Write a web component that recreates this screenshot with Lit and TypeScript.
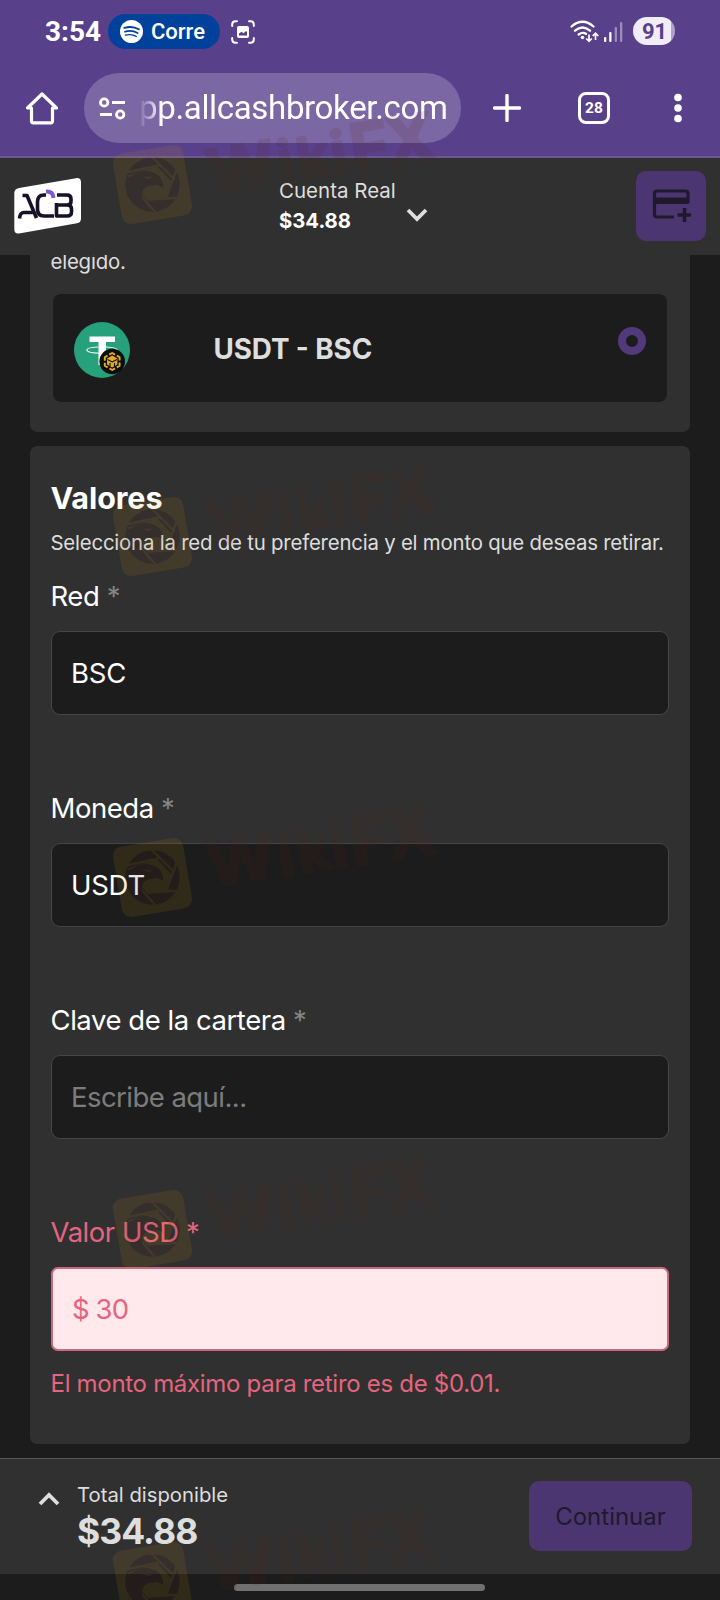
import { LitElement, html, svg, css } from "lit";
import { customElement, property } from "lit/decorators.js";

@customElement("form-field")
class FormField extends LitElement {
  @property() label = "";
  @property() value = "";
  @property() placeholder = "";
  @property() error = "";

  static styles = css`
    :host { display: block; height: 212px; }
    .label { height: 44px; line-height: 44px; padding-top: 0.5px; box-sizing: border-box; font-size: 27.5px; letter-spacing: -0.45px; color: #fff; margin: 0 0 14px -0.5px; white-space: pre; }
    .star { color: #858585; }
    .box {
      box-sizing: border-box; height: 84px; border: 1px solid #454545; border-radius: 9px;
      background: #1c1c1c; padding: 0 19px; line-height: 82px; font-size: 27.5px; letter-spacing: -0.25px; color: #fff; white-space: pre;
    }
    .placeholder { color: #7c7c7c; letter-spacing: -0.55px; }
    .bad { color: #e5657f; }
    .box.bad { background: #ffe9ed; border: 2px solid #ca6a7e; border-radius: 7px; line-height: 80px; letter-spacing: -0.9px; }
    .error { margin: 16px 0 0 -0.5px; line-height: 34px; font-size: 24px; letter-spacing: -0.3px; color: #e5657f; white-space: nowrap; }
  `;

  render() {
    const bad = this.error ? "bad" : "";
    return html`
      <div class="label ${bad}">${this.label} <span class="${bad || "star"}">*</span></div>
      <div class="box ${bad}">${this.value || html`<span class="placeholder">${this.placeholder}</span>`}</div>
      ${this.error ? html`<div class="error">${this.error}</div>` : ""}
    `;
  }
}

const WATERMARK_TOPS = [144, 496, 837, 1189, 1541];

@customElement("app-root")
class AppRoot extends LitElement {
  static styles = css`
    :host {
      display: block; position: relative; width: 720px; height: 1600px; overflow: hidden;
      background: #1c1c1c; font-family: Inter, "Liberation Sans", sans-serif; color: #dedede;
    }
    svg { display: block; flex: none; }
    .page { display: flex; flex-direction: column; height: 1600px; }
    .chrome { height: 156px; background: #59408b; border-bottom: 2px solid #6d5893; color: #fff; font-family: Roboto, sans-serif; flex: none; }
    .status { display: flex; align-items: center; height: 35px; padding: 14px 45px 0 45px; }
    .time { width: 63px; font: 700 28px/35px Roboto, sans-serif; white-space: nowrap; }
    .pill { display: flex; align-items: center; gap: 8px; box-sizing: border-box; width: 112px; height: 35px; border-radius: 18px; background: #00419b; padding-left: 12px; font: 500 22px/35px Roboto, sans-serif; white-space: nowrap; }
    .shot { margin-left: 11px; }
    .wifi { margin: -2px 0 0 auto; }
    .signal { margin: -2px 10px 0 5px; }
    .battery { width: 42px; height: 28px; border-radius: 14px; background: linear-gradient(90deg, #f1edf8 38px, #b0a2cb 38px); color: #59408b; font: 700 22px/29px Roboto, sans-serif; text-indent: 9px; margin-top: -2px; }
    .toolbar { display: flex; align-items: center; height: 70px; margin-top: 24px; padding: 0 24px 0 26px; }
    .omnibox { display: flex; align-items: center; box-sizing: border-box; width: 377px; height: 70px; margin-left: 26px; border-radius: 35px; background: #7b67a3; padding-left: 15px; }
    .url { margin-left: 13px; font: 400 33px/72px Roboto, sans-serif; letter-spacing: -0.33px; white-space: nowrap; -webkit-mask-image: linear-gradient(90deg, transparent 0, #000 22px); mask-image: linear-gradient(90deg, transparent 0, #000 22px); }
    .plus { margin-left: 32px; }
    .tabs { display: flex; align-items: center; justify-content: center; box-sizing: border-box; width: 32px; height: 32px; margin-left: 57px; border: 3px solid #fff; border-radius: 8px; font: 700 15.5px/26px Roboto, sans-serif; }
    .dots { margin-left: 64px; }
    .appbar { display: flex; align-items: center; box-sizing: border-box; height: 97px; flex: none; background: #303030; padding: 0 14px 2px; }
    .account { margin: 0 0 0 197px; width: 118px; font-size: 20.5px; line-height: 30px; white-space: nowrap; }
    .balance { font-weight: 700; color: #fff; font-size: 20.3px; }
    .caret { margin: 19px 0 0 9px; }
    .deposit { display: flex; align-items: center; justify-content: center; width: 70px; height: 70px; margin-left: auto; border-radius: 10px; background: #4c3672; }
    .content { display: flex; flex-direction: column; height: 1203px; flex: none; overflow: hidden; padding: 0 30px; }
    .card { box-sizing: border-box; background: #303030; border-radius: 7px; padding: 0 21px; flex: none; }
    .first { height: 198px; margin-top: -21px; padding: 13px 23px 0; }
    .note { line-height: 30px; height: 47px; font-size: 20.4px; letter-spacing: -0.2px; margin-left: -2.5px; }
    .option { display: flex; box-sizing: border-box; height: 108px; border-radius: 8px; background: #1c1c1c; padding: 28px 21px 0; }
    .name { margin-left: 83.5px; font-size: 27.8px; letter-spacing: -0.1px; line-height: 54px; font-weight: 700; font-feature-settings: "case"; white-space: nowrap; }
    .radio { box-sizing: border-box; width: 28px; height: 28px; margin: 5px 0 0 auto; border: 8.7px solid #503a7a; border-radius: 50%; }
    .values { height: 998px; margin-top: 14px; }
    .title { padding-top: 32px; font-size: 30.5px; letter-spacing: -0.1px; line-height: 40px; font-weight: 700; color: #fff; margin-left: -0.5px; }
    .lead { font-size: 20.4px; letter-spacing: -0.21px; line-height: 30px; margin: 10px 0 15px -0.5px; white-space: nowrap; }
    .footer { display: flex; box-sizing: border-box; height: 116px; flex: none; background: #303030; border-top: 1px solid #555; padding: 22px 28px 0 38px; }
    .up { margin-top: 11px; }
    .total { margin-left: 17px; font-size: 20.3px; line-height: 28px; white-space: nowrap; }
    .amount { font-size: 35.5px; letter-spacing: -0.95px; line-height: 45px; font-weight: 700; }
    .next { width: 163px; height: 70px; margin-left: auto; border-radius: 10px; background: #4c3672; color: #1f1a2b; font-size: 24px; line-height: 71px; text-align: center; }
    .gesture { width: 251px; height: 7px; margin: 10px 0 0 234px; border-radius: 4px; background: #707070; }
    .marks { position: absolute; top: 0; left: 0; pointer-events: none; }
    .mark-text { font-family: Inter, sans-serif; font-weight: 600; }
  `;

  watermark(top: number) {
    const ink = "rgb(88,32,16)";
    const gold = "rgb(206,150,8)";
    return svg`
      <g transform="translate(152.5 ${top + 40.5})" opacity=".115">
        <rect x="-35.5" y="-35.5" width="71" height="71" rx="9" fill="${gold}" transform="rotate(-9.5)"/>
        <circle r="27.300" fill="${ink}"/>
        <path d="M-25 -9L5 -18L19 -3L13 13L-5 16L-12 8Z" fill="${gold}"/>
        <path d="M-1 -28L22 -5M-26 -12L6 -19M25 -17L13 15M29 13L-4 15M3 28L-11 12" fill="none" stroke="${gold}" stroke-width="2.400"/>
        <path d="M-27 -2Q-24 -8 -20 -9Q-10 -16 0 -12Q10 -10 11 4Q6 -1 0 1Q-13 2 -10 15Q-6 23 2 27Q-16 26 -24 12L-19 13Q-26 7 -26 2L-21 4Z" fill="${ink}"/>
        <path d="M-9 -8Q-5 -4 0 -7Z" fill="${gold}"/>
        <g class="mark-text" transform="rotate(-9.5)" fill="${ink}" stroke="${ink}" stroke-width="3.500" stroke-linejoin="round">
          <text x="56" y="19" font-size="60" textLength="68" lengthAdjust="spacingAndGlyphs">W</text>
          <text x="127" y="21" font-size="59">i</text>
          <text x="147" y="20" font-size="57" textLength="32" lengthAdjust="spacingAndGlyphs">k</text>
          <text x="181" y="21" font-size="59">i</text>
          <text x="201 238" y="22" font-size="66">FX</text>
        </g>
      </g>`;
  }

  render() {
    return html`
      <div class="page">
        <div class="chrome">
          <div class="status">
            <div class="time">3:54</div>
            <div class="pill">
              <svg width="23" height="23" viewBox="0 0 24 24"><circle cx="12" cy="12" r="12" fill="#fff"/><g fill="none" stroke="#00419b" stroke-linecap="round"><path d="M4.5 8.2C9.5 6.7 15.500 7.200 19.700 9.700" stroke-width="2"/><path d="M5 12.200C9.500 10.800 14.500 11.400 18.400 13.600" stroke-width="1.700"/><path d="M5.600 15.800C9.500 14.800 13.600 15.200 17 17.200" stroke-width="1.500"/></g></svg>
              Corre
            </div>
            <svg class="shot" width="24" height="24" viewBox="0 0 24 24"><g fill="none" stroke="#fff" stroke-width="2" stroke-linecap="round"><path d="M1.200 6V4.500Q1.200 1.200 4.500 1.200H6M18 1.200H19.500Q22.800 1.200 22.800 4.500V6M22.800 18V19.500Q22.800 22.800 19.500 22.800H18M6 22.800H4.500Q1.200 22.800 1.200 19.500V18"/></g><rect x="6" y="6" width="12" height="12" rx="2" fill="#fff"/><path d="M8 15.500V13.500L10.500 11.800L12.500 13.300L15 11L16 12V15.500Z" fill="#59408b"/></svg>
            <svg class="wifi" width="29" height="24" viewBox="0 0 29 24"><g fill="none" stroke="#fff" stroke-width="2.300" stroke-linecap="round"><path d="M1.500 7.500Q12.500 -2 23.500 7.500M5 11.700Q12.500 5.300 20 11.700M8.700 15.500Q12.500 12.500 16 14.800"/></g><circle cx="12.500" cy="18.500" r="1.800" fill="#fff"/><g fill="none" stroke="#fff" stroke-width="1.700"><path d="M19 15.500V22M16.200 19.500L19 22.300L21.800 19.500M25.500 21V14.500M22.700 17L25.500 14.200L28.300 17"/></g></svg>
            <svg class="signal" width="19" height="22" viewBox="0 0 19 22"><g fill="#fff"><rect x="0" y="17" width="2.300" height="5" rx="1"/><rect x="5.200" y="12" width="2.300" height="10" rx="1"/><g opacity=".4"><rect x="10.700" y="7" width="2.300" height="15" rx="1"/><rect x="16" y="2" width="2.300" height="20" rx="1"/></g></g></svg>
            <div class="battery">91</div>
          </div>
          <div class="toolbar">
            <svg width="32" height="34" viewBox="0 0 32 34"><path d="M1.500 17H5.500V30Q5.500 31.800 7.300 31.800H24.700Q26.500 31.800 26.500 30V17H30.500L16 3Z" fill="none" stroke="#fff" stroke-width="3.200" stroke-linejoin="round"/></svg>
            <div class="omnibox">
              <svg width="27" height="23" viewBox="0 0 27 23"><g fill="none" stroke="#fff" stroke-width="2.800"><circle cx="5.200" cy="5.500" r="3.700"/><circle cx="21.200" cy="17.500" r="3.700"/><path d="M13 5.500H26M1 17.500H13"/></g></svg>
              <div class="url">pp.allcashbroker.com</div>
            </div>
            <svg class="plus" width="28" height="28" viewBox="0 0 28 28"><path d="M14 1.500V26.500M1.500 14H26.500" stroke="#fff" stroke-width="3.400" stroke-linecap="round"/></svg>
            <div class="tabs">28</div>
            <svg class="dots" width="8" height="30" viewBox="0 0 8 30"><g fill="#fff"><circle cx="4" cy="4.500" r="3.800"/><circle cx="4" cy="15" r="3.800"/><circle cx="4" cy="25.500" r="3.800"/></g></svg>
          </div>
        </div>

        <div class="appbar">
          <svg width="68" height="58" viewBox="0 0 68 58"><path d="M5 11L62 1.200Q67 .5 67 5.500V41.500Q67 45.500 63 46.300L5 56.500Q.3 57 .3 52.500V16Q.3 12 5 11Z" fill="#fff"/><g fill="none" stroke="#181028" stroke-width="3.600" stroke-linejoin="round"><path d="M8.500 18.500H13L22.500 41M5.500 41.500Q6 35.500 10 35.500H19"/><path d="M32 18H30Q23.500 18 23.500 25V32Q23.500 39 30 39H40"/><path d="M43 18H53Q57 18 57 22V24.500Q57 28 53 28H43M53 28Q57.500 28 57.500 32V35Q57.500 39 53 39H42.500V26"/></g><path d="M32 14.500Q39 14 39.500 21" fill="none" stroke="#8057dc" stroke-width="4"/></svg>
          <div class="account"><div>Cuenta Real</div><div class="balance">$34.88</div></div>
          <svg class="caret" width="22" height="14" viewBox="0 0 22 14"><path d="M2 2L11 11L20 2" fill="none" stroke="#dedede" stroke-width="3.800"/></svg>
          <div class="deposit"><svg width="40" height="34" viewBox="0 0 40 34"><g fill="none" stroke="#1f1a2b"><path d="M23 28H6Q3.500 28 3.500 25.500V4.500Q3.500 2 6 2H34.500Q37 2 37 4.500V14.500" stroke-width="3.200"/><path d="M3.500 11.700H37" stroke-width="6.400"/><path d="M33.500 19V33M26.500 26H40" stroke-width="3.600"/></g></svg></div>
        </div>

        <div class="content">
          <div class="card first">
            <div class="note">elegido.</div>
            <div class="option">
              <svg width="56" height="56" viewBox="0 0 56 56"><circle cx="28" cy="28" r="28" fill="#26a17b"/><path d="M15.500 14.500H41V20H32V43H24.500V20H15.500Z" fill="#fff"/><path d="M24 25Q13 25.500 12.800 28Q13 31 28 31.300Q43 31 43.200 28Q43 25.500 32 25" fill="none" stroke="#fff" stroke-width="1.100"/><circle cx="38.200" cy="39.500" r="12.800" fill="#0c0e0c"/><path d="M38.200 31L45.600 35.200V43.800L38.200 48L30.800 43.800V35.200Z" fill="none" stroke="#e4a928" stroke-width="1.900" stroke-dasharray="6.500 2" stroke-dashoffset="3.200"/><path d="M38.200 33.500L43.400 36.500V42.500L38.200 45.500L33 42.500V36.500Z" fill="#e4a928"/><path d="M33.500 37.500L38.200 40L43 37.500M36 41V44.500M40.500 41V44.500" fill="none" stroke="#0c0e0c" stroke-width="1.100"/></svg>
              <div class="name">USDT - BSC</div>
              <div class="radio"></div>
            </div>
          </div>
          <div class="card values">
            <div class="title">Valores</div>
            <div class="lead">Selecciona la red de tu preferencia y el monto que deseas retirar.</div>
            <form-field label="Red" value="BSC"></form-field>
            <form-field label="Moneda" value="USDT"></form-field>
            <form-field label="Clave de la cartera" placeholder="Escribe aquí..."></form-field>
            <form-field label="Valor USD" value="$ 30" error="El monto máximo para retiro es de $0.01."></form-field>
          </div>
        </div>

        <div class="footer">
          <svg class="up" width="22" height="14" viewBox="0 0 22 14"><path d="M2 12L11 3L20 12" fill="none" stroke="#dedede" stroke-width="3.800"/></svg>
          <div class="total"><div>Total disponible</div><div class="amount">$34.88</div></div>
          <div class="next">Continuar</div>
        </div>
        <div class="gesture"></div>
      </div>
      <svg class="marks" width="720" height="1600" viewBox="0 0 720 1600">${WATERMARK_TOPS.map((t) => this.watermark(t))}</svg>
    `;
  }
}
